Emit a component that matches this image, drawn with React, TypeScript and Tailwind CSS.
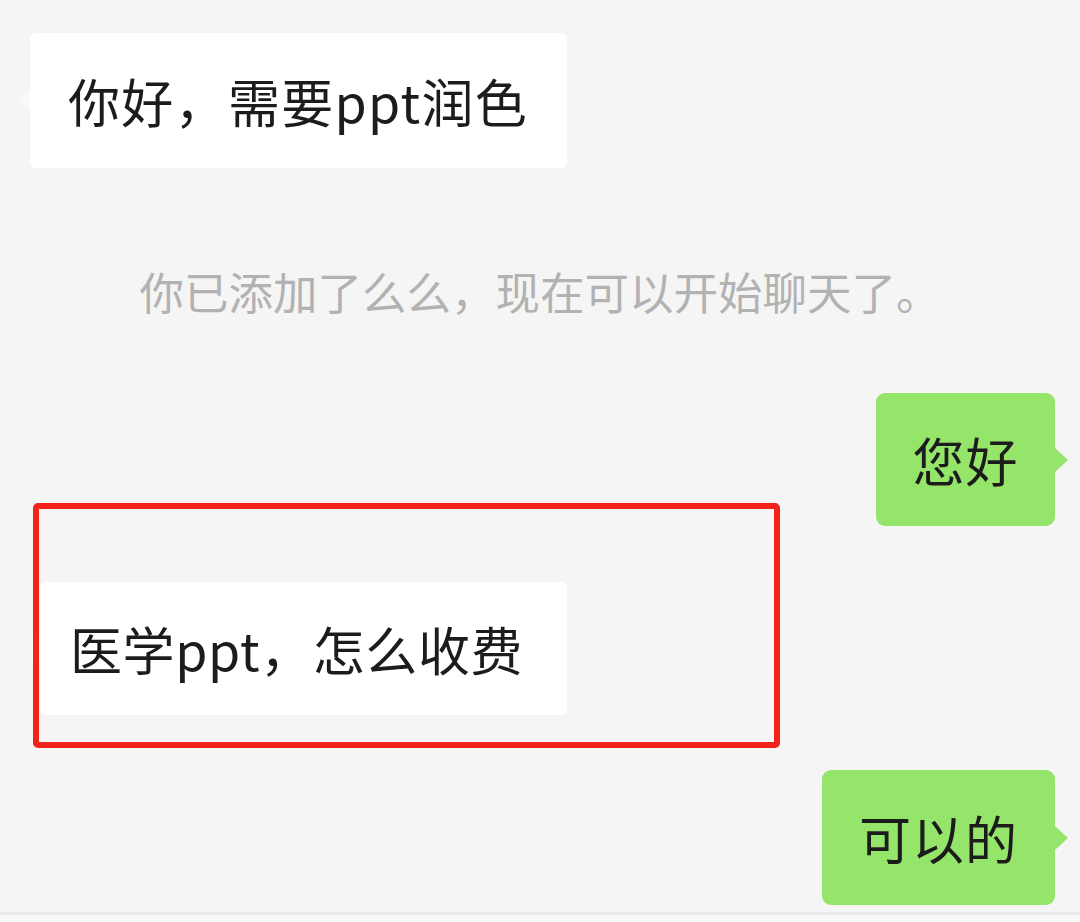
import React from "react";

const font = { fontFamily: '"Noto Sans CJK SC", "Noto Sans", sans-serif' };

function GreenBubble({ text, width, height }: { text: string; width: number; height: number }) {
  return (
    <div className="relative" style={{ width, height }}>
      <div className="flex h-full w-full items-center justify-center rounded-[9px] bg-[#95e56a] text-[52px] leading-none tracking-[1px] text-[#1c1c1c]">
        {text}
      </div>
      <div className="absolute right-[-13px] top-1/2 h-0 w-0 -translate-y-1/2 border-y-[12px] border-l-[13px] border-y-transparent border-l-[#95e56a]" />
    </div>
  );
}

function WhiteBubble({ text, width, height, pl, track }: { text: string; width: number; height: number; pl: number; track: number }) {
  return (
    <div className="relative" style={{ width, height }}>
      <div
        className="flex h-full w-full items-center rounded-[6px] bg-white text-[52px] leading-none text-[#1c1c1c]"
        style={{ paddingLeft: pl, letterSpacing: track }}
      >
        {text}
      </div>
      <div className="absolute left-[-11px] top-1/2 h-0 w-0 -translate-y-1/2 border-y-[11px] border-r-[11px] border-y-transparent border-r-[#f9f9f9]" />
    </div>
  );
}

export default function App() {
  return (
    <div className="relative flex h-[922px] w-[1080px] flex-col overflow-hidden bg-[#f5f5f5]" style={font}>
      <div className="pl-[30px] pt-[33px]">
        <WhiteBubble text="你好，需要ppt润色" width={537} height={135} pl={38} track={1.3} />
      </div>

      <div className="mt-[98px] text-center text-[44.5px] leading-[50px] text-[#b2b2b2]">
        你已添加了么么，现在可以开始聊天了。
      </div>

      <div className="mt-[77px] flex justify-end pr-[25px]">
        <GreenBubble text="您好" width={179} height={133} />
      </div>

      <div className="mt-[56px] pl-[40px]">
        <WhiteBubble text="医学ppt，怎么收费" width={527} height={133} pl={30} track={0.6} />
      </div>

      <div className="mt-[55px] flex justify-end pr-[25px]">
        <GreenBubble text="可以的" width={233} height={135} />
      </div>

      <div className="mt-auto h-[3px] bg-[#e9e9e9]" />
      <div className="h-[7px] bg-[#f7f7f7]" />

      {/* annotation box */}
      <div className="pointer-events-none absolute left-[33px] top-[503px] h-[245px] w-[747px] rounded-[5px] border-[6px] border-[#f3221b]" />
    </div>
  );
}
